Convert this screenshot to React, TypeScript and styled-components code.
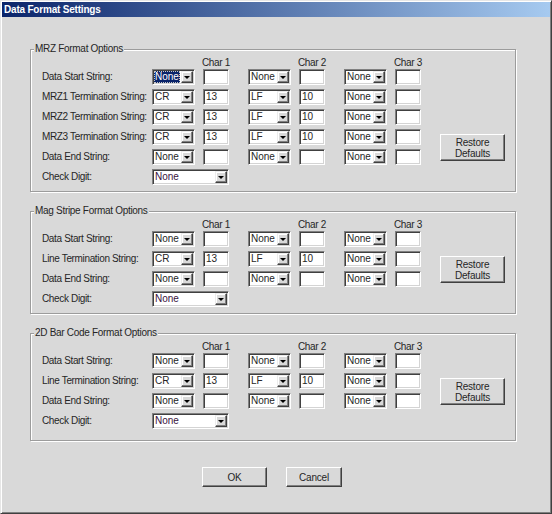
import React from "react";
import styled, { createGlobalStyle, css } from "styled-components";

const FACE = "#d9d9d9";
const INK = "#262626";

const GlobalStyle = createGlobalStyle`
  html, body {
    margin: 0;
    padding: 0;
    background: ${FACE};
  }
  body {
    font-family: "Liberation Sans", Arial, sans-serif;
    font-size: 10px;
    color: ${INK};
  }
`;

const Window = styled.div`
  box-sizing: border-box;
  width: 552px;
  height: 514px;
  padding: 1px;
  background: ${FACE};
  border: 1px solid;
  border-color: #e6e6e6 #404040 #404040 #e6e6e6;
  box-shadow: inset 1px 1px 0 #fff, inset -1px -1px 0 #808080;
  display: flex;
  flex-direction: column;
`;

const TitleBar = styled.div`
  height: 15px;
  padding-left: 2px;
  line-height: 15px;
  font-weight: bold;
  letter-spacing: -0.2px;
  color: #fff;
  background: linear-gradient(to right, #0a246a, #a6caf0);
`;

const Body = styled.div`
  display: flex;
  flex-direction: column;
  gap: 19px;
  padding: 32px 0 0 28px;
`;

const Group = styled.section<{ $padBottom: number }>`
  position: relative;
  box-sizing: border-box;
  width: 486px;
  padding: 7px 0 ${(p) => p.$padBottom}px 11px;
  border: 1px solid #9c9c9c;
  box-shadow: inset 1px 1px 0 #fff, 1px 1px 0 #fff;
`;

const GroupTitle = styled.span`
  position: absolute;
  top: -7px;
  left: 3px;
  padding: 0 1px;
  line-height: 12px;
  letter-spacing: -0.3px;
  background: ${FACE};
`;

const columns = css`
  display: grid;
  grid-template-columns: 91px repeat(3, 77px) 65px;
  column-gap: 19px;
`;

const HeaderRow = styled.div`
  ${columns};
  height: 12px;
  line-height: 12px;
`;

const HeaderCell = styled.div<{ $col: number }>`
  grid-column: ${(p) => p.$col};
  display: flex;
  justify-content: flex-end;
`;

const HeaderText = styled.span`
  width: 26px;
  display: flex;
  justify-content: center;
  white-space: nowrap;
  letter-spacing: -0.3px;
`;

const Rows = styled.div`
  ${columns};
  grid-auto-rows: 16px;
  row-gap: 4px;
`;

const Label = styled.div`
  grid-column: 1;
  line-height: 16px;
  white-space: nowrap;
  letter-spacing: -0.35px;
`;

const CharCell = styled.div`
  display: flex;
  gap: 8px;
`;

const sunken = css`
  box-sizing: border-box;
  height: 16px;
  background: #fff;
  border: 1px solid;
  border-color: #808080 #fff #fff #808080;
  box-shadow: inset 1px 1px 0 #404040, inset -1px -1px 0 #d4d4d4;
`;

const Combo = styled.div<{ $w: number }>`
  ${sunken};
  width: ${(p) => p.$w}px;
  padding: 1px;
  display: flex;
`;

const ComboValue = styled.span<{ $selected?: boolean; $tint?: string }>`
  flex: 1;
  margin-right: 1px;
  padding-left: 1px;
  line-height: 12px;
  white-space: nowrap;
  overflow: hidden;
  color: ${(p) => (p.$selected ? "#fff" : p.$tint || INK)};
  background: ${(p) => (p.$selected ? "#0a246a" : "transparent")};
  outline: ${(p) => (p.$selected ? "1px dotted #c8c8c8" : "none")};
  outline-offset: -1px;
`;

const DropButton = styled.span`
  box-sizing: border-box;
  width: 12px;
  height: 12px;
  display: flex;
  align-items: center;
  justify-content: center;
  background: ${FACE};
  border: 1px solid;
  border-color: #ececec #404040 #404040 #ececec;
  box-shadow: inset -1px -1px 0 #808080, inset 1px 1px 0 #fff;

  &::after {
    content: "";
    width: 0;
    height: 0;
    border-left: 3px solid transparent;
    border-right: 3px solid transparent;
    border-top: 3px solid #000;
  }
`;

const TextBox = styled.div`
  ${sunken};
  width: 26px;
  padding: 0 2px;
  line-height: 14px;
`;

const PushButton = styled.button<{ $w: number; $h: number }>`
  box-sizing: border-box;
  width: ${(p) => p.$w}px;
  height: ${(p) => p.$h}px;
  margin: 0;
  padding: 0;
  font-family: inherit;
  font-size: 10px;
  line-height: 11px;
  letter-spacing: -0.2px;
  color: ${INK};
  background: ${FACE};
  border: 1px solid;
  border-color: #fff #404040 #404040 #fff;
  box-shadow: inset -1px -1px 0 #808080;
`;

const RestoreButton = styled(PushButton)<{ $row: number }>`
  grid-column: 5;
  grid-row: ${(p) => p.$row} / span 2;
  align-self: start;
  margin-top: 5px;
`;

const Footer = styled.div`
  display: flex;
  justify-content: center;
  gap: 19px;
  margin-top: 26px;
  padding-right: 8px;
`;

type Char = { value: string; code?: string; selected?: boolean };
type Row = { label: string; chars: Char[] };

const none: Char = { value: "None" };
const cr: Char = { value: "CR", code: "13" };
const lf: Char = { value: "LF", code: "10" };

const ComboBox = ({ c, w = 43, tint }: { c: Char; w?: number; tint?: string }) => (
  <Combo $w={w}>
    <ComboValue $selected={c.selected} $tint={tint}>
      {c.value}
    </ComboValue>
    <DropButton />
  </Combo>
);

type GroupProps = {
  title: string;
  rows: Row[];
  buttonRow: number;
  padBottom: number;
};

const OptionsGroup = ({ title, rows, buttonRow, padBottom }: GroupProps) => (
  <Group $padBottom={padBottom}>
    <GroupTitle>{title}</GroupTitle>
    <HeaderRow>
      {[1, 2, 3].map((n) => (
        <HeaderCell key={n} $col={n + 1}>
          <HeaderText>Char {n}</HeaderText>
        </HeaderCell>
      ))}
    </HeaderRow>
    <Rows>
      <RestoreButton $w={65} $h={27} $row={buttonRow}>
        Restore
        <br />
        Defaults
      </RestoreButton>
      {rows.map((r) => (
        <React.Fragment key={r.label}>
          <Label>{r.label}</Label>
          {r.chars.map((c, i) => (
            <CharCell key={i}>
              <ComboBox c={c} />
              <TextBox>{c.code}</TextBox>
            </CharCell>
          ))}
        </React.Fragment>
      ))}
      <Label>Check Digit:</Label>
      <ComboBox c={none} w={77} tint="#3a1240" />
    </Rows>
  </Group>
);

const termRow = (label: string): Row => ({ label, chars: [cr, lf, none] });
const noneRow = (label: string): Row => ({ label, chars: [none, none, none] });

const mrzRows: Row[] = [
  { label: "Data Start String:", chars: [{ value: "None", selected: true }, none, none] },
  termRow("MRZ1 Termination String:"),
  termRow("MRZ2 Termination String:"),
  termRow("MRZ3 Termination String:"),
  noneRow("Data End String:"),
];

const lineRows: Row[] = [
  noneRow("Data Start String:"),
  termRow("Line Termination String:"),
  noneRow("Data End String:"),
];

export default function App() {
  return (
    <>
      <GlobalStyle />
      <Window>
        <TitleBar>Data Format Settings</TitleBar>
        <Body>
          <OptionsGroup title="MRZ Format Options" rows={mrzRows} buttonRow={4} padBottom={6} />
          <OptionsGroup title="Mag Stripe Format Options" rows={lineRows} buttonRow={2} padBottom={6} />
          <OptionsGroup title="2D Bar Code Format Options" rows={lineRows} buttonRow={2} padBottom={11} />
        </Body>
        <Footer>
          <PushButton $w={65} $h={20}>OK</PushButton>
          <PushButton $w={56} $h={20}>Cancel</PushButton>
        </Footer>
      </Window>
    </>
  );
}
